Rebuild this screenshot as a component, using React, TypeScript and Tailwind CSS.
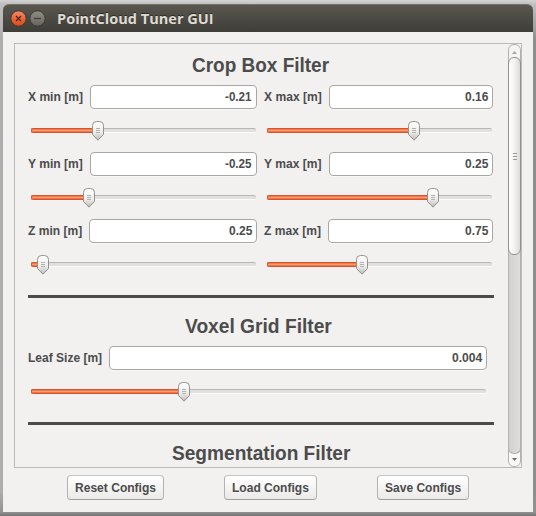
import React from "react";

const bold = "font-['Liberation_Sans',Arial,sans-serif] font-bold text-[#4c4c4c] whitespace-nowrap";

function Heading({ text, width }: { text: string; width: number }) {
  return (
    <h2 className={`${bold} h-[24px] flex items-center justify-center text-[20.5px] leading-[24px]`}>
      <Fit text={text} width={width} />
    </h2>
  );
}

/* Text squeezed or stretched horizontally to an exact advance width. */
function Fit({ text, width }: { text: string; width: number }) {
  const ref = React.useRef<HTMLSpanElement>(null);
  const [scale, setScale] = React.useState(1);
  React.useLayoutEffect(() => {
    if (ref.current) setScale(width / ref.current.offsetWidth);
  }, [width]);
  return (
    <span className="inline-flex" style={{ width }}>
      <span ref={ref} className="inline-block shrink-0 origin-left" style={{ transform: `scaleX(${scale})` }}>
        {text}
      </span>
    </span>
  );
}

function Thumb({ center }: { center: number }) {
  return (
    <svg className="absolute top-0" style={{ left: center - 6 }} width="13" height="20" viewBox="0 0 13 20">
      <defs>
        <linearGradient id="thumb" x1="0" y1="0" x2="0" y2="1">
          <stop offset="0" stopColor="#ffffff" />
          <stop offset=".6" stopColor="#ebebea" />
          <stop offset="1" stopColor="#b9b8b4" />
        </linearGradient>
      </defs>
      <path d="M.5 4.5 Q.5 .5 4.5 .5 H7.5 Q11.5 .5 11.5 4.5 V13.5 L6 19.2 L.5 13.5 Z" fill="url(#thumb)" stroke="#94928e" />
      <path d="M4 7.5H8M4 9.5H8M4 11.5H8" stroke="#b3b1ad" />
    </svg>
  );
}

function Slider({ width, value }: { width: number; value: number }) {
  return (
    <div className="relative ml-[3px] h-[20px] pt-[7px]" style={{ width }}>
      <div className="flex h-[5px] rounded-[2px] border-t border-[#b9b7b3] bg-[linear-gradient(#e1e0de_3px,#fbfbfa_3px)]">
        <div
          className="-mt-px h-[5px] rounded-l-[2px] border border-r-0 border-[#d6542b] bg-[linear-gradient(#f37a4b_33%,#fb9c76_33%,#fb9c76_66%,#ef7545_66%)]"
          style={{ width: value }}
        />
      </div>
      <Thumb center={value} />
    </div>
  );
}

type FieldProps = { label: string; labelWidth: number; entryWidth: number; value: string; valueWidth: number; slider: number; position: number };

function Field({ label, labelWidth, entryWidth, value, valueWidth, slider, position }: FieldProps) {
  return (
    <div className="flex flex-col gap-[12px]">
      <div className="flex h-[24px] items-center justify-between" style={{ width: slider + 4 }}>
        <label className={`${bold} text-[12.5px] leading-[24px]`}>
          <Fit text={label} width={labelWidth} />
        </label>
        <div
          className={`${bold} flex h-[24px] shrink-0 items-center justify-end rounded-[4px] border border-[#a9a7a2] bg-white pr-[4px] text-[12.5px] text-[#3c3c3c] shadow-[0_1px_0_#f8f8f7]`}
          style={{ width: entryWidth }}
        >
          <Fit text={value} width={valueWidth} />
        </div>
      </div>
      <Slider width={slider} value={position} />
    </div>
  );
}

function Rule() {
  return <div className="h-[3px] w-[466px] bg-[#4b4b4b]" />;
}

function ConfigButton({ text, width, textWidth }: { text: string; width: number; textWidth: number }) {
  return (
    <button
      className={`${bold} flex h-[25px] items-center justify-center rounded-[4px] border border-[#b4b2ae] border-t-[#c6c4c0] border-b-[#a19f9b] bg-linear-to-b from-white to-[#ebeae9] pt-[2px] text-[12.5px]`}
      style={{ width }}
    >
      <Fit text={text} width={textWidth} />
    </button>
  );
}

function Scrollbar() {
  return (
    <div className="flex h-[423px] w-[13px] flex-col rounded-[6px] border border-[#b4b2ae] bg-linear-to-r from-[#d3d1ce] to-[#dfdedc]">
      <div className="-mb-[5px] flex h-[17px] shrink-0 justify-center rounded-t-[6px] bg-[#f5f4f3] pt-[6px]">
        <svg width="5" height="3" viewBox="0 0 5 3"><path d="M0 3L2.5 0L5 3Z" fill="#aaa8a4" /></svg>
      </div>
      <div className="-mx-px flex h-[198px] shrink-0 flex-col items-center justify-center gap-px rounded-[6px] border border-[#94928e] bg-linear-to-r from-white via-[#f3f2f1] to-[#dcdad8]">
        <i className="mb-px h-px w-[4px] bg-[#999793]" />
        <i className="mb-px h-px w-[4px] bg-[#999793]" />
        <i className="h-px w-[4px] bg-[#999793]" />
      </div>
      <div className="flex flex-1 flex-col justify-end rounded-b-[6px] bg-[linear-gradient(transparent_50%,#f9f8f7_50%)]">
        <div className="-mx-px flex-1 rounded-b-[6px] border border-t-0 border-[#b4b2ae] bg-linear-to-r from-[#d3d1ce] to-[#dfdedc]" />
        <div className="flex h-[12px] items-end justify-center rounded-b-[6px] pb-[5px]">
          <svg width="5" height="3" viewBox="0 0 5 3"><path d="M0 0L2.5 3L5 0Z" fill="#6f6d69" /></svg>
        </div>
      </div>
    </div>
  );
}

function TitleBar() {
  return (
    <header className="flex h-[28px] items-center rounded-t-[6px] border-t border-[#75726a] bg-linear-to-b from-[#5a574f] to-[#3e3d38] pl-[7px]">
      <svg width="37" height="17" viewBox="0 0 37 17">
        <defs>
          <linearGradient id="close" x1="0" y1="0" x2="0" y2="1">
            <stop offset="0" stopColor="#f58963" />
            <stop offset="1" stopColor="#dd4814" />
          </linearGradient>
          <linearGradient id="mini" x1="0" y1="0" x2="0" y2="1">
            <stop offset="0" stopColor="#918f87" />
            <stop offset="1" stopColor="#65635c" />
          </linearGradient>
        </defs>
        <circle cx="8.5" cy="8.5" r="7.7" fill="url(#close)" stroke="#3b3833" />
        <path d="M6 6L11 11M11 6L6 11" stroke="#4b251a" strokeWidth="1.2" />
        <circle cx="27.5" cy="8.5" r="7.7" fill="url(#mini)" stroke="#3b3833" />
        <path d="M24 8.5H31" stroke="#3c3b37" strokeWidth="1.2" />
      </svg>
      <h1 className="ml-[10px] whitespace-nowrap font-['Open_Sans','Noto_Sans',sans-serif] text-[14px] leading-[24px] font-bold text-[#dfdbd2] [text-shadow:0_-1px_0_#2c2b28]">
        <Fit text="PointCloud Tuner GUI" width={157} />
      </h1>
    </header>
  );
}

export default function App() {
  return (
    <main className="h-[516px] w-[536px] overflow-hidden bg-[linear-gradient(to_bottom,#d3d3d3,#c0c0c0_4px,transparent_40px),linear-gradient(to_top,#727272,#929292_4px,transparent_24px),linear-gradient(to_right,#adadad_50%,#8f8f8f_50%)] px-[3px] pt-[4px] pb-[4px]">
      <div className="flex h-[508px] w-[530px] flex-col">
        <TitleBar />
        <div className="flex flex-1 flex-col bg-[#f2f1f0] pt-[11px] pl-[11px]">
          <section className="flex h-[425px] w-[508px] overflow-hidden border border-[#bcbab6]">
            <div className="w-[493px] pl-[13px] pt-[9px]">
              <div className="w-[466px]">
                <div className="w-[465px]"><Heading text="Crop Box Filter" width={137} /></div>
                <div className="mt-[8px] grid grid-cols-[236px_1fr] gap-y-[11px]">
                  <Field label="X min [m]" labelWidth={55} entryWidth={167} value="-0.21" valueWidth={27} slider={225} position={67} />
                  <Field label="X max [m]" labelWidth={58} entryWidth={164} value="0.16" valueWidth={23} slider={225} position={147} />
                  <Field label="Y min [m]" labelWidth={55} entryWidth={167} value="-0.25" valueWidth={27} slider={225} position={58} />
                  <Field label="Y max [m]" labelWidth={58} entryWidth={164} value="0.25" valueWidth={23} slider={225} position={166} />
                  <Field label="Z min [m]" labelWidth={54} entryWidth={168} value="0.25" valueWidth={23} slider={225} position={12} />
                  <Field label="Z max [m]" labelWidth={57} entryWidth={165} value="0.75" valueWidth={23} slider={225} position={95} />
                </div>
                <div className="mt-[20px]"><Rule /></div>
                <div className="mt-[16px] w-[460px]"><Heading text="Voxel Grid Filter" width={147} /></div>
                <div className="mt-[8px]">
                  <Field label="Leaf Size [m]" labelWidth={74} entryWidth={378} value="0.004" valueWidth={30} slider={455} position={153} />
                </div>
                <div className="mt-[20px]"><Rule /></div>
                <div className="mt-[16px]"><Heading text="Segmentation Filter" width={178} /></div>
              </div>
            </div>
            <Scrollbar />
          </section>
          <footer className="mt-[7px] flex pl-[53px]">
            <ConfigButton text="Reset Configs" width={97} textWidth={81} />
            <div className="ml-[60px]"><ConfigButton text="Load Configs" width={93} textWidth={77} /></div>
            <div className="ml-[60px]"><ConfigButton text="Save Configs" width={92} textWidth={76} /></div>
          </footer>
        </div>
      </div>
    </main>
  );
}
